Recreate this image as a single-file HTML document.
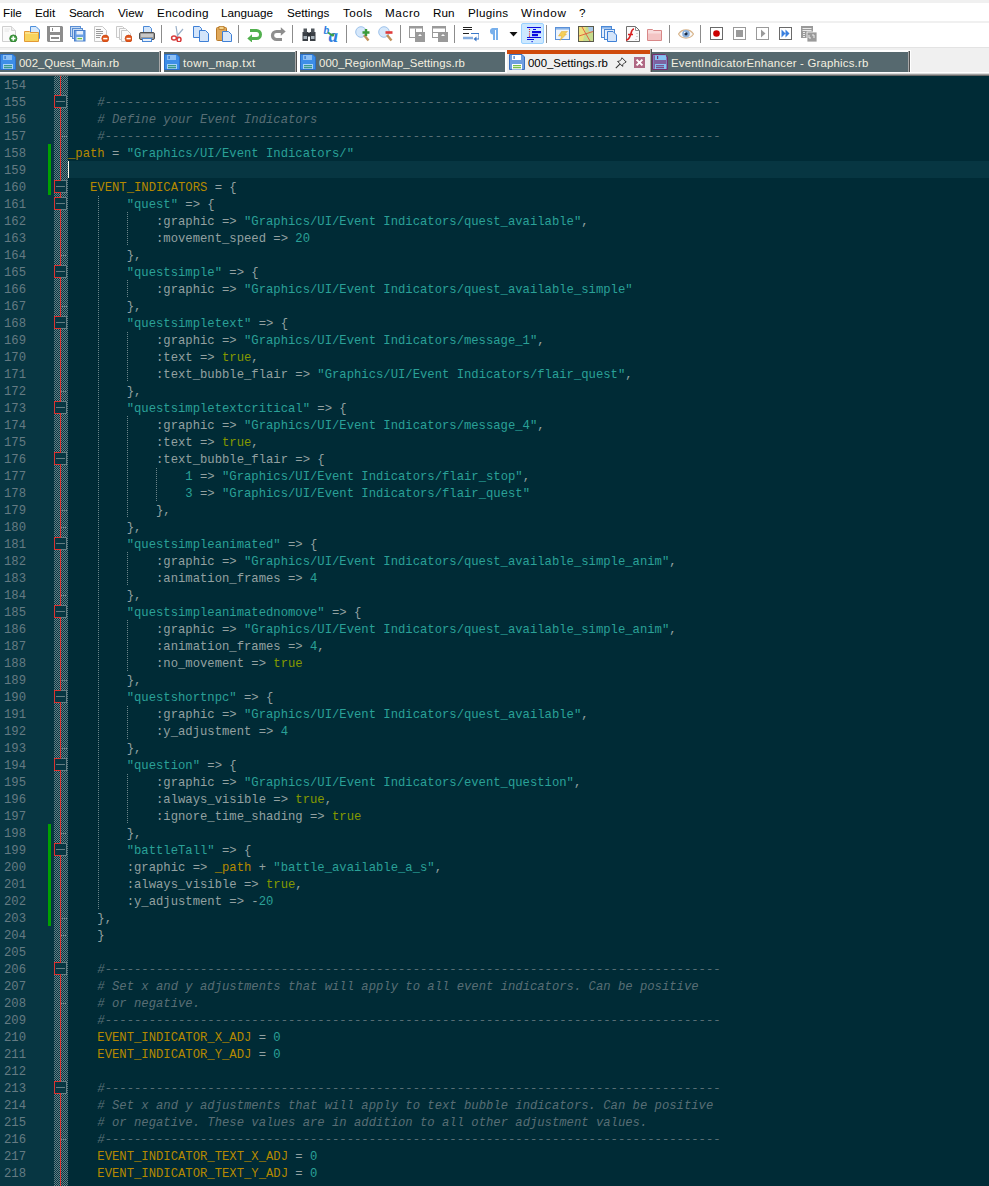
<!DOCTYPE html>
<html><head><meta charset="utf-8">
<style>
*{box-sizing:border-box}
html,body{margin:0;padding:0}
body{width:989px;height:1186px;overflow:hidden;position:relative;background:#f0f0f0;font-family:"Liberation Sans",sans-serif}
#menubar{position:absolute;left:0;top:3px;width:989px;height:18px;background:#fff}
#menubar span{position:absolute;top:2px;font-size:11.7px;color:#000;line-height:16px}
#mline{position:absolute;left:0;top:21px;width:989px;height:2px;background:#f0f0f0}
#toolbar{position:absolute;left:0;top:23px;width:989px;height:24px;background:#fff}
#tline{position:absolute;left:0;top:47px;width:989px;height:1px;background:#e3e3e3}
#tabbar{position:absolute;left:0;top:48px;width:989px;height:24px;background:#f0f0f0}
.tab{position:absolute;top:52px;height:20px;background:#56696f}
.sepl,.sepd{position:absolute;top:51px;width:1px;height:21px;background:#a8a8a8}
.sepd{background:#505050}
.tab .tx{position:absolute;left:19px;top:4px;font-size:11.4px;color:#f4f0e0;white-space:nowrap;line-height:14px}
.tab svg{position:absolute;left:0;top:2px}
.tab.act{top:50px;height:23px;background:#f0f0f0;border-top:4px solid #cf4a0c;z-index:2}
.tab.act>svg:first-child{left:2px;top:0px}
.tab.act .tx{left:21px;top:2px}
#tabline{position:absolute;left:0;top:72px;width:989px;height:4px;background:linear-gradient(to bottom,#fff 0 1px,#dcdcdc 1px 2px,#a0a0a0 2px 3px,#6a6a6a 3px 4px)}
#edtop{display:none}
#editor{position:absolute;left:0;top:0;width:989px;height:1186px;pointer-events:none}
#ed_bg{position:absolute;left:0;top:76px;width:989px;height:1110px;background:#002b36}
#lnm{position:absolute;left:0;top:76px;width:54px;height:1110px;background:#073642}
#fm{position:absolute;left:54px;top:76px;width:14px;height:1110px}
.ln{position:absolute;left:4px;height:17px;font-family:"Liberation Mono",monospace;font-size:12.22px;line-height:17px;color:#657b83;padding-top:2px}
.line{position:absolute;left:68px;width:921px;height:17px;font-family:"Liberation Mono",monospace;font-size:12.22px;line-height:17px;color:#93a1a1;white-space:pre;padding-top:2px}
.line.cur{background:#073642}
.c{color:#586e75;font-style:italic}
.s{color:#2aa198}
.k{color:#b58900}
.t{color:#859900}
.g0,.g1{position:absolute;width:1px;height:17px;background:repeating-linear-gradient(to bottom,#6a8489 0 1px,transparent 1px 2px)}
.g1{background:repeating-linear-gradient(to bottom,transparent 0 1px,#6a8489 1px 2px)}
#redline{position:absolute;left:60px;top:76px;width:1px;height:1110px;background:#dc322f}
.box{position:absolute;left:54px;width:13px;height:13px;background:#073642;border:1px solid #647d82}
.box .bl{position:absolute;left:-1px;top:-1px;width:7px;height:13px;border:1px solid #dc322f;border-right:none}
.minus{position:absolute;left:1px;top:5px;width:9px;height:1px;background:#647d82}
.tick{position:absolute;left:61px;width:6px;height:1px;background:#647d82}
.green{position:absolute;left:48px;width:3px;background:#00a000}
#caret{position:absolute;left:68px;top:161px;width:1px;height:17px;background:#fdf6e3}
</style></head><body>
<div id="menubar">
<span style="left:3px">File</span><span style="left:35px">Edit</span><span style="left:69px;letter-spacing:-0.35px">Search</span><span style="left:118px">View</span><span style="left:157px;letter-spacing:0.4px">Encoding</span><span style="left:221px">Language</span><span style="left:287px">Settings</span><span style="left:343px;letter-spacing:0.45px">Tools</span><span style="left:385px;letter-spacing:0.6px">Macro</span><span style="left:433px">Run</span><span style="left:468px;letter-spacing:0.3px">Plugins</span><span style="left:521px;letter-spacing:0.65px">Window</span><span style="left:579px">?</span>
</div>
<div id="mline"></div>
<div id="toolbar"></div><div style="position:absolute;left:0;top:0;width:0;height:0"><svg style="position:absolute;left:2px;top:26px" width="16" height="16" viewBox="0 0 16 16"><path d="M0.5,0.5H9.5L13.5,4.5V15.5H0.5Z" fill="#fbfbfb" stroke="#cfcfcf"/><path d="M9.5,0.5V4.5H13.5" fill="#eee" stroke="#d5d5d5"/><path d="M2.5,3H8M2.5,5H7" stroke="#e6e6e6"/><circle cx="11.3" cy="12.5" r="3.6" fill="#3c9a3c" stroke="#2e7d2e" stroke-width="0.8"/><path d="M11.3,10.3V14.7M9.1,12.5H13.5" stroke="#fff" stroke-width="1.6"/></svg>
<svg style="position:absolute;left:24px;top:26px" width="16" height="16" viewBox="0 0 16 16"><path d="M6.5,0.5H12L15.5,4V12.5H6.5Z" fill="#d6e8fb" stroke="#4c8fdc"/><path d="M0.5,5.5H5.5L6.5,6.5H14.5V15.5H0.5Z" fill="#fbe28a" stroke="#e39a35"/><path d="M1,8H14V15H1Z" fill="#f6cf4a" opacity="0.7"/></svg>
<svg style="position:absolute;left:47px;top:26px" width="16" height="16" viewBox="0 0 16 16"><path d="M0,0H15L16,1V16H1L0,15Z" fill="#8d8d8d"/><rect x="3" y="1" width="10" height="5" fill="#fff"/><rect x="5" y="2" width="1" height="3" fill="#8d8d8d"/><rect x="3" y="9" width="10" height="6" fill="#fff"/><rect x="4" y="11" width="8" height="2" fill="#8d8d8d"/></svg>
<svg style="position:absolute;left:70px;top:26px" width="16" height="16" viewBox="0 0 16 16"><rect x="0.5" y="0.5" width="10" height="10" fill="#c4daf4" stroke="#5b8fd4"/><rect x="2.5" y="2.5" width="10" height="10" fill="#c4daf4" stroke="#5b8fd4"/><rect x="4.5" y="4.5" width="10.5" height="10.5" fill="#6aa0e4" stroke="#4a80cc"/><rect x="6.5" y="5" width="6.5" height="3.5" fill="#e4eefb"/><rect x="6.5" y="11" width="6.5" height="3.5" fill="#eef5ea"/><rect x="7.5" y="12" width="4.5" height="1.2" fill="#6abf3a"/></svg>
<svg style="position:absolute;left:93px;top:26px" width="16" height="16" viewBox="0 0 16 16"><path d="M1.5,0.5H9.5L13.5,4.5V15.5H1.5Z" fill="#fbfbfb" stroke="#c9c9c9"/><path d="M3,3.5H8M3,5.5H10M3,7.5H10M3,9.5H8M3,11.5H7" stroke="#9a9a9a" stroke-width="1"/><circle cx="12.3" cy="12.6" r="3.5" fill="#e0561a" stroke="#c84310" stroke-width="0.7"/><path d="M10.2,12.6H14.4" stroke="#fff" stroke-width="1.5"/></svg>
<svg style="position:absolute;left:116px;top:26px" width="16" height="16" viewBox="0 0 16 16"><path d="M0.5,0.5H6.5L9.5,3.5V11.5H0.5Z" fill="#fbfbfb" stroke="#c9c9c9"/><path d="M3.5,2.5H9.5L12.5,5.5V13.5H3.5Z" fill="#fbfbfb" stroke="#c9c9c9"/><path d="M5.5,4.5H11.5L14.5,7.5V15.5H5.5Z" fill="#fbfbfb" stroke="#c9c9c9"/><circle cx="12.6" cy="12.6" r="3.5" fill="#e0561a" stroke="#c84310" stroke-width="0.7"/><path d="M10.5,12.6H14.7" stroke="#fff" stroke-width="1.5"/></svg>
<svg style="position:absolute;left:139px;top:26px" width="16" height="16" viewBox="0 0 16 16"><path d="M4.5,0.5H10.5L12.5,2.5V7.5H4.5Z" fill="#d3e5fa" stroke="#4a88d6"/><rect x="0.5" y="6.5" width="15" height="7" rx="1.5" fill="#9a9a9a" stroke="#505050"/><rect x="2" y="8" width="12" height="3" fill="#c8c8c8"/><rect x="3.5" y="12.5" width="9" height="3" fill="#e8f1fb" stroke="#4a88d6"/></svg>
<div style="position:absolute;left:161px;top:25px;width:1px;height:18px;background:#8c8c8c"></div>
<svg style="position:absolute;left:170px;top:26px" width="16" height="16" viewBox="0 0 16 16"><path d="M8,13L6,0M7,10L13,3" stroke="#9ab0c8" stroke-width="1.2"/><ellipse cx="4" cy="12" rx="2.4" ry="2" fill="none" stroke="#d83a3a" stroke-width="1.5"/><ellipse cx="9" cy="13.5" rx="2" ry="2.3" fill="none" stroke="#d83a3a" stroke-width="1.5"/></svg>
<svg style="position:absolute;left:193px;top:26px" width="16" height="16" viewBox="0 0 16 16"><path d="M0.5,0.5H6.5L8.5,2.5V11.5H0.5Z" fill="#d4e5fa" stroke="#3f80d6"/><path d="M6.5,4.5H12.5L15.5,7.5V15.5H6.5Z" fill="#d4e5fa" stroke="#3f80d6"/></svg>
<svg style="position:absolute;left:216px;top:26px" width="16" height="16" viewBox="0 0 16 16"><rect x="0.5" y="1.5" width="10" height="13" rx="1" fill="#e0a85a" stroke="#b97a2a"/><rect x="3" y="0.5" width="5" height="3" fill="#f3d28a" stroke="#b97a2a" stroke-width="0.8"/><path d="M6.5,5.5H12.5L15.5,8.5V15.5H6.5Z" fill="#dbe9fb" stroke="#3f80d6"/></svg>
<div style="position:absolute;left:238px;top:25px;width:1px;height:18px;background:#8c8c8c"></div>
<svg style="position:absolute;left:247px;top:26px" width="16" height="16" viewBox="0 0 16 16"><path d="M3.5,12.5H9.5A4,4 0 0 0 9.5,4.5H3" fill="none" stroke="#52b04e" stroke-width="3"/><path d="M0.3,12.5L5,8.3V16.5Z" fill="#52b04e"/></svg>
<svg style="position:absolute;left:270px;top:26px" width="16" height="16" viewBox="0 0 16 16"><path d="M12,5.5H6.5A4,4 0 0 0 6.5,13.5H12" fill="none" stroke="#8e8e8e" stroke-width="3.2"/><path d="M15.7,5.5L10.8,1.2V9.8Z" fill="#8e8e8e"/></svg>
<div style="position:absolute;left:292px;top:25px;width:1px;height:18px;background:#8c8c8c"></div>
<svg style="position:absolute;left:301px;top:26px" width="16" height="16" viewBox="0 0 16 16"><rect x="1.5" y="6" width="5.5" height="9" fill="#3a3f45"/><rect x="9" y="6" width="5.5" height="9" fill="#3a3f45"/><rect x="2.5" y="2.5" width="3.5" height="4" fill="#50565c"/><rect x="10" y="2.5" width="3.5" height="4" fill="#50565c"/><rect x="6.5" y="6.5" width="3" height="4" fill="#2a2e33"/><rect x="2.5" y="10" width="3.5" height="3" fill="#a8b2ba"/><rect x="10" y="10" width="3.5" height="3" fill="#a8b2ba"/></svg>
<svg style="position:absolute;left:323px;top:26px" width="18" height="16" viewBox="0 0 18 16"><text x="0.5" y="8" font-family="Liberation Serif" font-style="italic" font-weight="bold" font-size="11.5" fill="#2f7fe0">b</text><text x="5.5" y="15.5" font-family="Liberation Serif" font-style="italic" font-weight="bold" font-size="19" fill="#2f7fe0">a</text><path d="M5,6.5L10,10" stroke="#3aa04a" stroke-width="1.8"/><path d="M10.8,10.8L8.2,7.8L11.5,7.5Z" fill="#3aa04a"/></svg>
<div style="position:absolute;left:346px;top:25px;width:1px;height:18px;background:#8c8c8c"></div>
<svg style="position:absolute;left:355px;top:26px" width="16" height="16" viewBox="0 0 16 16"><circle cx="6" cy="6" r="5.3" fill="#d6e8fb" stroke="#9ec2ea"/><path d="M9,9L13.5,14.5" stroke="#c0915a" stroke-width="2.4"/><path d="M11,3V10M7.5,6.5H14.5" stroke="#3a9a3a" stroke-width="2.4"/></svg>
<svg style="position:absolute;left:378px;top:26px" width="16" height="16" viewBox="0 0 16 16"><circle cx="6" cy="6" r="5.3" fill="#d6e8fb" stroke="#9ec2ea"/><path d="M9,9L13.5,14.5" stroke="#c0915a" stroke-width="2.4"/><path d="M7.5,6.5H14.5" stroke="#e03a3a" stroke-width="2.6"/></svg>
<div style="position:absolute;left:400px;top:25px;width:1px;height:18px;background:#8c8c8c"></div>
<svg style="position:absolute;left:409px;top:26px" width="16" height="16" viewBox="0 0 16 16"><rect x="0.5" y="0.5" width="13" height="11" fill="#fff" stroke="#9a9a9a"/><rect x="0.5" y="0.5" width="13" height="2" fill="#9a9a9a"/><path d="M6.5,2.5V11.5" stroke="#9a9a9a"/><rect x="6" y="6" width="10" height="10" fill="#9a9a9a"/><path d="M9,10L11,8L13,10Z" fill="#fff"/></svg>
<svg style="position:absolute;left:432px;top:26px" width="16" height="16" viewBox="0 0 16 16"><rect x="0.5" y="0.5" width="13" height="11" fill="#fff" stroke="#9a9a9a"/><rect x="0.5" y="0.5" width="13" height="2" fill="#9a9a9a"/><path d="M0.5,6.5H13.5" stroke="#9a9a9a"/><rect x="6" y="6" width="10" height="10" fill="#9a9a9a"/><path d="M9,10L11,8L13,10Z" fill="#fff"/></svg>
<div style="position:absolute;left:454px;top:25px;width:1px;height:18px;background:#8c8c8c"></div>
<svg style="position:absolute;left:463px;top:26px" width="16" height="16" viewBox="0 0 16 16"><path d="M0,1.5H9M0,3.5H9M0,7.5H6" stroke="#222" stroke-width="1.1"/><path d="M0,12H10" stroke="#86aee0" stroke-width="2.5"/><path d="M8,7.5H16V13H13" fill="none" stroke="#3a78c8" stroke-width="1.1"/><path d="M10.5,13L13.5,10.5V15.5Z" fill="#3a78c8"/></svg>
<svg style="position:absolute;left:489px;top:27px" width="10" height="14" viewBox="0 0 10 14"><path d="M3.5,1H9V13H7V3H6V13H4V7.5A3.3,3.3 0 0 1 3.5,1Z" fill="#78b0ec"/></svg>
<svg style="position:absolute;left:509px;top:32px" width="9" height="5" viewBox="0 0 9 5"><path d="M0.5,0H8.5L4.5,4.5Z" fill="#111"/></svg>
<div style="position:absolute;left:521px;top:23px;width:23px;height:21px;background:#cce8ff;border:1px solid #99d1ff;border-radius:2px"></div>
<svg style="position:absolute;left:526px;top:27px" width="16" height="16" viewBox="0 0 16 16"><path d="M1,0.5H15M1,10.5H15M1,12.5H8" stroke="#0a0ae0" stroke-width="1.2"/><path d="M7,2.5H10" stroke="#0a0ae0" stroke-width="1"/><rect x="6" y="4" width="9" height="2.2" fill="#0a0ae0"/><rect x="6" y="7" width="6" height="2.2" fill="#0a0ae0"/><rect x="5.5" y="14" width="1.2" height="1.2" fill="#0a0ae0"/><path d="M3.5,2V10" stroke="#e02020" stroke-width="1.1" stroke-dasharray="1.1,1.1"/></svg>
<div style="position:absolute;left:546px;top:25px;width:1px;height:18px;background:#8c8c8c"></div>
<svg style="position:absolute;left:555px;top:26px" width="16" height="16" viewBox="0 0 16 16"><rect x="0.5" y="1.5" width="14" height="12" fill="#eef4fb" stroke="#5a90d8"/><rect x="1" y="2" width="13" height="1.6" fill="#8ab4e8"/><path d="M6.5,5.5H12.5L9.5,8H11.5L5,14.5L6.8,10H3.5Z" fill="#f4cf5a" stroke="#e0aa30" stroke-width="0.5"/></svg>
<svg style="position:absolute;left:578px;top:26px" width="16" height="16" viewBox="0 0 16 16"><rect x="0.5" y="0.5" width="15" height="15" fill="#c6dc8e" stroke="#5a5a4a"/><path d="M1,1H8L5,15H1Z" fill="#ece07e"/><path d="M10,1H15V6L11,5Z" fill="#a8c8e8"/><path d="M4,1L12,15M1,10L15,5.5" stroke="#e05a3a" stroke-width="0.9"/></svg>
<svg style="position:absolute;left:601px;top:26px" width="16" height="16" viewBox="0 0 16 16"><rect x="0.5" y="0.5" width="10" height="11" fill="#e4eefb" stroke="#4a88d6"/><rect x="1" y="1" width="9" height="1.6" fill="#8ab4e8"/><rect x="3.5" y="3.5" width="10" height="10" fill="#e4eefb" stroke="#4a88d6"/><path d="M6.5,5.5H12L15.5,9V15.5H6.5Z" fill="#d4e5fa" stroke="#3f80d6"/></svg>
<svg style="position:absolute;left:624px;top:26px" width="16" height="16" viewBox="0 0 16 16"><path d="M2.5,0.5H11.5L15.5,4.5V15.5H2.5Z" fill="#fbfbfb" stroke="#707070"/><path d="M11.5,0.5V4.5H15.5" fill="none" stroke="#909090"/><path d="M13,7V8M13,10V11M12,13V14" stroke="#999" stroke-width="0.8"/><path d="M10,3C7.5,3 7.5,6 6.5,9C5.5,12 4.5,14 2,14M4,8.5H9" stroke="#d82020" stroke-width="1.6" fill="none"/></svg>
<svg style="position:absolute;left:647px;top:26px" width="16" height="16" viewBox="0 0 16 16"><path d="M0.5,3.5H5.5L6.5,4.5H14.5V14.5H0.5Z" fill="#f8dcdc" stroke="#d88888"/><path d="M1,7.5H14V14H1Z" fill="#f0b4b4" opacity="0.6"/></svg>
<div style="position:absolute;left:669px;top:25px;width:1px;height:18px;background:#8c8c8c"></div>
<svg style="position:absolute;left:678px;top:26px" width="16" height="16" viewBox="0 0 16 16"><path d="M0.5,8C4,2.5 12,2.5 15.5,8C12,13.5 4,13.5 0.5,8Z" fill="#f8f8f8" stroke="#d8b48a" stroke-width="1.2"/><circle cx="8" cy="7.8" r="3.8" fill="#8ab0dc"/><circle cx="8" cy="7.8" r="1.6" fill="#1a2a40"/><circle cx="6.8" cy="6.6" r="0.8" fill="#fff"/></svg>
<div style="position:absolute;left:700px;top:25px;width:1px;height:18px;background:#8c8c8c"></div>
<svg style="position:absolute;left:710px;top:27px" width="13" height="13" viewBox="0 0 13 13"><rect x="0.5" y="0.5" width="12" height="12" fill="#fff" stroke="#6a6a6a"/><circle cx="6.5" cy="6.5" r="3.3" fill="#cc0000"/></svg>
<svg style="position:absolute;left:733px;top:27px" width="13" height="13" viewBox="0 0 13 13"><rect x="0.5" y="0.5" width="12" height="12" fill="#fff" stroke="#9a9a9a"/><rect x="3" y="3" width="7" height="7" fill="#9a9a9a"/></svg>
<svg style="position:absolute;left:756px;top:27px" width="13" height="13" viewBox="0 0 13 13"><rect x="0.5" y="0.5" width="12" height="12" fill="#fff" stroke="#9a9a9a"/><path d="M5,2.5L9.5,6.5L5,10.5Z" fill="#9a9a9a"/></svg>
<svg style="position:absolute;left:779px;top:27px" width="13" height="13" viewBox="0 0 13 13"><rect x="0.5" y="0.5" width="12" height="12" fill="#fff" stroke="#6a6a6a"/><path d="M2.5,2.5L6.5,6.5L2.5,10.5ZM6.5,2.5L10.5,6.5L6.5,10.5Z" fill="#3a80e0"/></svg>
<svg style="position:absolute;left:801px;top:26px" width="16" height="16" viewBox="0 0 16 16"><rect x="0" y="0" width="12" height="12" fill="#9a9a9a"/><path d="M1.5,2.5H10.5M1.5,4.5H10.5" stroke="#fff" stroke-width="0.8"/><path d="M2,6.5H4M2,8.5H4M2,10.5H4" stroke="#fff" stroke-width="0.8"/><rect x="6" y="6" width="10" height="10" fill="#9a9a9a" stroke="#fff" stroke-width="0.8"/><path d="M8,9V12H10M11,9H13V12" stroke="#fff" stroke-width="0.8" fill="none"/></svg></div>
<div id="tline"></div>
<div id="tabbar"></div>
<div style="position:absolute;left:0;top:50px;width:911px;height:22px;background:#fff"></div>
<div class="tab" style="left:0;width:159px"><svg width="16" height="16" viewBox="0 0 16 16"><path d="M0.5,0.5H13L15.5,3V15.5H0.5Z" fill="#3d8ee8" stroke="#2a6fc8"/><rect x="3" y="1" width="9" height="5" fill="#8ec0f4"/><rect x="4.5" y="2" width="1.2" height="3" fill="#2a6fc8"/><rect x="3" y="10" width="10" height="5" fill="#a8d2f8"/><rect x="4" y="11" width="8" height="1.3" fill="#3a9a8a"/><rect x="4" y="13" width="8" height="1.3" fill="#3a9a8a"/></svg><span class="tx">002_Quest_Main.rb</span></div>
<div class="sepl" style="left:159px"></div><div class="sepd" style="left:160px"></div>
<div class="tab" style="left:164px;width:131px"><svg width="16" height="16" viewBox="0 0 16 16"><path d="M0.5,0.5H13L15.5,3V15.5H0.5Z" fill="#3d8ee8" stroke="#2a6fc8"/><rect x="3" y="1" width="9" height="5" fill="#8ec0f4"/><rect x="4.5" y="2" width="1.2" height="3" fill="#2a6fc8"/><rect x="3" y="10" width="10" height="5" fill="#a8d2f8"/><rect x="4" y="11" width="8" height="1.3" fill="#3a9a8a"/><rect x="4" y="13" width="8" height="1.3" fill="#3a9a8a"/></svg><span class="tx" style="letter-spacing:0.4px">town_map.txt</span></div>
<div class="sepl" style="left:295px"></div><div class="sepd" style="left:296px"></div>
<div class="tab" style="left:300px;width:205px"><svg width="16" height="16" viewBox="0 0 16 16"><path d="M0.5,0.5H13L15.5,3V15.5H0.5Z" fill="#3d8ee8" stroke="#2a6fc8"/><rect x="3" y="1" width="9" height="5" fill="#8ec0f4"/><rect x="4.5" y="2" width="1.2" height="3" fill="#2a6fc8"/><rect x="3" y="10" width="10" height="5" fill="#a8d2f8"/><rect x="4" y="11" width="8" height="1.3" fill="#3a9a8a"/><rect x="4" y="13" width="8" height="1.3" fill="#3a9a8a"/></svg><span class="tx" style="letter-spacing:0.06px">000_RegionMap_Settings.rb</span></div>
<div class="tab act" style="left:507px;width:143px"><svg width="16" height="16" viewBox="0 0 16 16"><path d="M0.5,0.5H13L15.5,3V15.5H0.5Z" fill="#6f9ee0" stroke="#3a70c0"/><rect x="3" y="1" width="9" height="5" fill="#fff"/><rect x="4.5" y="2" width="1.2" height="3" fill="#3a70c0"/><rect x="3" y="10" width="10" height="5.5" fill="#fff"/><rect x="4" y="11" width="8" height="1.3" fill="#7ac04a"/><rect x="4" y="13" width="8" height="1.3" fill="#7ac04a"/></svg><span class="tx" style="color:#000">000_Settings.rb</span>
<svg style="position:absolute;left:108px;top:3px" width="12" height="12" viewBox="0 0 12 12"><path d="M7,0.8L11.2,5L9.8,5.6L7.8,7.6L7.6,9.4L2.6,4.4L4.4,4.2L6.4,2.2Z" fill="none" stroke="#333" stroke-width="1"/><path d="M4.8,7.2L0.8,11.2" stroke="#333" stroke-width="1.1"/></svg>
<svg style="position:absolute;left:127px;top:3px" width="11" height="11" viewBox="0 0 11 11"><rect width="11" height="11" fill="#b06884"/><path d="M2.6,2.6L8.4,8.4M8.4,2.6L2.6,8.4" stroke="#fff" stroke-width="2"/></svg></div>
<div class="sepl" style="left:650px;top:49px;height:24px"></div><div class="sepd" style="left:651px;top:49px;height:24px"></div>
<div class="tab" style="left:652px;width:256px"><svg width="16" height="16" viewBox="0 0 16 16"><path d="M0.5,0.5H13L15.5,3V15.5H0.5Z" fill="#7e62a0" stroke="#74306e"/><path d="M1.5,1.5H12.5L14.5,3.5V14.5H1.5Z" fill="none" stroke="#86b8ea" stroke-width="0.6" opacity="0.6"/><rect x="3" y="1.2" width="11" height="4.8" fill="#86c4f4"/><rect x="5" y="2" width="1.2" height="3" fill="#74306e"/><rect x="3" y="10" width="11" height="5" fill="#86c4f4"/><rect x="4" y="11.3" width="8" height="1" fill="#74306e"/><rect x="4" y="13.2" width="8" height="1" fill="#74306e"/></svg><span class="tx" style="letter-spacing:0.19px">EventIndicatorEnhancer - Graphics.rb</span></div>
<div class="sepl" style="left:908px"></div><div class="sepd" style="left:909px"></div>
<div id="tabline"></div>
<div id="edtop"></div>
<div id="ed_bg"></div>
<div id="lnm"></div>
<svg id="fm" width="14" height="1110"><defs><pattern id="chk" width="2" height="2" patternUnits="userSpaceOnUse"><rect width="2" height="2" fill="#073642"/><rect x="1" y="0" width="1" height="1" fill="#647d82"/><rect x="0" y="1" width="1" height="1" fill="#647d82"/></pattern></defs><rect width="14" height="1110" fill="url(#chk)" shape-rendering="crispEdges"/></svg>
<div id="redline"></div>
<div class="box" style="top:95px"><div class="bl"></div><div class="minus"></div></div>
<div class="box" style="top:180px"><div class="bl"></div><div class="minus"></div></div>
<div class="box" style="top:197px"><div class="bl"></div><div class="minus"></div></div>
<div class="box" style="top:265px"><div class="bl"></div><div class="minus"></div></div>
<div class="box" style="top:316px"><div class="bl"></div><div class="minus"></div></div>
<div class="box" style="top:401px"><div class="bl"></div><div class="minus"></div></div>
<div class="box" style="top:452px"><div class="bl"></div><div class="minus"></div></div>
<div class="box" style="top:537px"><div class="bl"></div><div class="minus"></div></div>
<div class="box" style="top:605px"><div class="bl"></div><div class="minus"></div></div>
<div class="box" style="top:690px"><div class="bl"></div><div class="minus"></div></div>
<div class="box" style="top:758px"><div class="bl"></div><div class="minus"></div></div>
<div class="box" style="top:843px"><div class="bl"></div><div class="minus"></div></div>
<div class="box" style="top:962px"><div class="bl"></div><div class="minus"></div></div>
<div class="box" style="top:1081px"><div class="bl"></div><div class="minus"></div></div>
<div class="tick" style="top:136px"></div>
<div class="tick" style="top:255px"></div>
<div class="tick" style="top:306px"></div>
<div class="tick" style="top:391px"></div>
<div class="tick" style="top:510px"></div>
<div class="tick" style="top:527px"></div>
<div class="tick" style="top:595px"></div>
<div class="tick" style="top:680px"></div>
<div class="tick" style="top:748px"></div>
<div class="tick" style="top:833px"></div>
<div class="tick" style="top:918px"></div>
<div class="tick" style="top:935px"></div>
<div class="tick" style="top:1003px"></div>
<div class="tick" style="top:1139px"></div>
<div class="green" style="top:144px;height:51px"></div>
<div class="green" style="top:824px;height:102px"></div>
<div class="ln" style="top:76px">154</div>
<div class="ln" style="top:93px">155</div>
<div class="ln" style="top:110px">156</div>
<div class="ln" style="top:127px">157</div>
<div class="ln" style="top:144px">158</div>
<div class="ln" style="top:161px">159</div>
<div class="ln" style="top:178px">160</div>
<div class="ln" style="top:195px">161</div>
<div class="ln" style="top:212px">162</div>
<div class="ln" style="top:229px">163</div>
<div class="ln" style="top:246px">164</div>
<div class="ln" style="top:263px">165</div>
<div class="ln" style="top:280px">166</div>
<div class="ln" style="top:297px">167</div>
<div class="ln" style="top:314px">168</div>
<div class="ln" style="top:331px">169</div>
<div class="ln" style="top:348px">170</div>
<div class="ln" style="top:365px">171</div>
<div class="ln" style="top:382px">172</div>
<div class="ln" style="top:399px">173</div>
<div class="ln" style="top:416px">174</div>
<div class="ln" style="top:433px">175</div>
<div class="ln" style="top:450px">176</div>
<div class="ln" style="top:467px">177</div>
<div class="ln" style="top:484px">178</div>
<div class="ln" style="top:501px">179</div>
<div class="ln" style="top:518px">180</div>
<div class="ln" style="top:535px">181</div>
<div class="ln" style="top:552px">182</div>
<div class="ln" style="top:569px">183</div>
<div class="ln" style="top:586px">184</div>
<div class="ln" style="top:603px">185</div>
<div class="ln" style="top:620px">186</div>
<div class="ln" style="top:637px">187</div>
<div class="ln" style="top:654px">188</div>
<div class="ln" style="top:671px">189</div>
<div class="ln" style="top:688px">190</div>
<div class="ln" style="top:705px">191</div>
<div class="ln" style="top:722px">192</div>
<div class="ln" style="top:739px">193</div>
<div class="ln" style="top:756px">194</div>
<div class="ln" style="top:773px">195</div>
<div class="ln" style="top:790px">196</div>
<div class="ln" style="top:807px">197</div>
<div class="ln" style="top:824px">198</div>
<div class="ln" style="top:841px">199</div>
<div class="ln" style="top:858px">200</div>
<div class="ln" style="top:875px">201</div>
<div class="ln" style="top:892px">202</div>
<div class="ln" style="top:909px">203</div>
<div class="ln" style="top:926px">204</div>
<div class="ln" style="top:943px">205</div>
<div class="ln" style="top:960px">206</div>
<div class="ln" style="top:977px">207</div>
<div class="ln" style="top:994px">208</div>
<div class="ln" style="top:1011px">209</div>
<div class="ln" style="top:1028px">210</div>
<div class="ln" style="top:1045px">211</div>
<div class="ln" style="top:1062px">212</div>
<div class="ln" style="top:1079px">213</div>
<div class="ln" style="top:1096px">214</div>
<div class="ln" style="top:1113px">215</div>
<div class="ln" style="top:1130px">216</div>
<div class="ln" style="top:1147px">217</div>
<div class="ln" style="top:1164px">218</div>
<div class="line" style="top:76px"></div>
<div class="line" style="top:93px">    <i class="c">#------------------------------------------------------------------------------------</i></div>
<div class="line" style="top:110px">    <i class="c"># Define your Event Indicators</i></div>
<div class="line" style="top:127px">    <i class="c">#------------------------------------------------------------------------------------</i></div>
<div class="line" style="top:144px"><span class="k">_path</span> = <span class="s">&quot;Graphics/UI/Event Indicators/&quot;</span></div>
<div class="line cur" style="top:161px"></div>
<div class="line" style="top:178px">   <span class="k">EVENT_INDICATORS</span> = {</div>
<div class="line" style="top:195px">        <span class="s">&quot;quest&quot;</span> =&gt; {</div>
<div class="line" style="top:212px">            :graphic =&gt; <span class="s">&quot;Graphics/UI/Event Indicators/quest_available&quot;</span>,</div>
<div class="line" style="top:229px">            :movement_speed =&gt; <span class="s">20</span></div>
<div class="line" style="top:246px">        },</div>
<div class="line" style="top:263px">        <span class="s">&quot;questsimple&quot;</span> =&gt; {</div>
<div class="line" style="top:280px">            :graphic =&gt; <span class="s">&quot;Graphics/UI/Event Indicators/quest_available_simple&quot;</span></div>
<div class="line" style="top:297px">        },</div>
<div class="line" style="top:314px">        <span class="s">&quot;questsimpletext&quot;</span> =&gt; {</div>
<div class="line" style="top:331px">            :graphic =&gt; <span class="s">&quot;Graphics/UI/Event Indicators/message_1&quot;</span>,</div>
<div class="line" style="top:348px">            :text =&gt; <span class="t">true</span>,</div>
<div class="line" style="top:365px">            :text_bubble_flair =&gt; <span class="s">&quot;Graphics/UI/Event Indicators/flair_quest&quot;</span>,</div>
<div class="line" style="top:382px">        },</div>
<div class="line" style="top:399px">        <span class="s">&quot;questsimpletextcritical&quot;</span> =&gt; {</div>
<div class="line" style="top:416px">            :graphic =&gt; <span class="s">&quot;Graphics/UI/Event Indicators/message_4&quot;</span>,</div>
<div class="line" style="top:433px">            :text =&gt; <span class="t">true</span>,</div>
<div class="line" style="top:450px">            :text_bubble_flair =&gt; {</div>
<div class="line" style="top:467px">                <span class="s">1</span> =&gt; <span class="s">&quot;Graphics/UI/Event Indicators/flair_stop&quot;</span>,</div>
<div class="line" style="top:484px">                <span class="s">3</span> =&gt; <span class="s">&quot;Graphics/UI/Event Indicators/flair_quest&quot;</span></div>
<div class="line" style="top:501px">            },</div>
<div class="line" style="top:518px">        },</div>
<div class="line" style="top:535px">        <span class="s">&quot;questsimpleanimated&quot;</span> =&gt; {</div>
<div class="line" style="top:552px">            :graphic =&gt; <span class="s">&quot;Graphics/UI/Event Indicators/quest_available_simple_anim&quot;</span>,</div>
<div class="line" style="top:569px">            :animation_frames =&gt; <span class="s">4</span></div>
<div class="line" style="top:586px">        },</div>
<div class="line" style="top:603px">        <span class="s">&quot;questsimpleanimatednomove&quot;</span> =&gt; {</div>
<div class="line" style="top:620px">            :graphic =&gt; <span class="s">&quot;Graphics/UI/Event Indicators/quest_available_simple_anim&quot;</span>,</div>
<div class="line" style="top:637px">            :animation_frames =&gt; <span class="s">4</span>,</div>
<div class="line" style="top:654px">            :no_movement =&gt; <span class="t">true</span></div>
<div class="line" style="top:671px">        },</div>
<div class="line" style="top:688px">        <span class="s">&quot;questshortnpc&quot;</span> =&gt; {</div>
<div class="line" style="top:705px">            :graphic =&gt; <span class="s">&quot;Graphics/UI/Event Indicators/quest_available&quot;</span>,</div>
<div class="line" style="top:722px">            :y_adjustment =&gt; <span class="s">4</span></div>
<div class="line" style="top:739px">        },</div>
<div class="line" style="top:756px">        <span class="s">&quot;question&quot;</span> =&gt; {</div>
<div class="line" style="top:773px">            :graphic =&gt; <span class="s">&quot;Graphics/UI/Event Indicators/event_question&quot;</span>,</div>
<div class="line" style="top:790px">            :always_visible =&gt; <span class="t">true</span>,</div>
<div class="line" style="top:807px">            :ignore_time_shading =&gt; <span class="t">true</span></div>
<div class="line" style="top:824px">        },</div>
<div class="line" style="top:841px">        <span class="s">&quot;battleTall&quot;</span> =&gt; {</div>
<div class="line" style="top:858px">        :graphic =&gt; <span class="k">_path</span> + <span class="s">&quot;battle_available_a_s&quot;</span>,</div>
<div class="line" style="top:875px">        :always_visible =&gt; <span class="t">true</span>,</div>
<div class="line" style="top:892px">        :y_adjustment =&gt; -<span class="s">20</span></div>
<div class="line" style="top:909px">    },</div>
<div class="line" style="top:926px">    }</div>
<div class="line" style="top:943px"></div>
<div class="line" style="top:960px">    <i class="c">#------------------------------------------------------------------------------------</i></div>
<div class="line" style="top:977px">    <i class="c"># Set x and y adjustments that will apply to all event indicators. Can be positive</i></div>
<div class="line" style="top:994px">    <i class="c"># or negative.</i></div>
<div class="line" style="top:1011px">    <i class="c">#------------------------------------------------------------------------------------</i></div>
<div class="line" style="top:1028px">    <span class="k">EVENT_INDICATOR_X_ADJ</span> = <span class="s">0</span></div>
<div class="line" style="top:1045px">    <span class="k">EVENT_INDICATOR_Y_ADJ</span> = <span class="s">0</span></div>
<div class="line" style="top:1062px"></div>
<div class="line" style="top:1079px">    <i class="c">#------------------------------------------------------------------------------------</i></div>
<div class="line" style="top:1096px">    <i class="c"># Set x and y adjustments that will apply to text bubble indicators. Can be positive</i></div>
<div class="line" style="top:1113px">    <i class="c"># or negative. These values are in addition to all other adjustment values.</i></div>
<div class="line" style="top:1130px">    <i class="c">#------------------------------------------------------------------------------------</i></div>
<div class="line" style="top:1147px">    <span class="k">EVENT_INDICATOR_TEXT_X_ADJ</span> = <span class="s">0</span></div>
<div class="line" style="top:1164px">    <span class="k">EVENT_INDICATOR_TEXT_Y_ADJ</span> = <span class="s">0</span></div>
<div class="g1" style="left:98px;top:195px"></div>
<div class="g0" style="left:98px;top:212px"></div>
<div class="g0" style="left:127px;top:212px"></div>
<div class="g1" style="left:98px;top:229px"></div>
<div class="g1" style="left:127px;top:229px"></div>
<div class="g0" style="left:98px;top:246px"></div>
<div class="g1" style="left:98px;top:263px"></div>
<div class="g0" style="left:98px;top:280px"></div>
<div class="g0" style="left:127px;top:280px"></div>
<div class="g1" style="left:98px;top:297px"></div>
<div class="g0" style="left:98px;top:314px"></div>
<div class="g1" style="left:98px;top:331px"></div>
<div class="g1" style="left:127px;top:331px"></div>
<div class="g0" style="left:98px;top:348px"></div>
<div class="g0" style="left:127px;top:348px"></div>
<div class="g1" style="left:98px;top:365px"></div>
<div class="g1" style="left:127px;top:365px"></div>
<div class="g0" style="left:98px;top:382px"></div>
<div class="g1" style="left:98px;top:399px"></div>
<div class="g0" style="left:98px;top:416px"></div>
<div class="g0" style="left:127px;top:416px"></div>
<div class="g1" style="left:98px;top:433px"></div>
<div class="g1" style="left:127px;top:433px"></div>
<div class="g0" style="left:98px;top:450px"></div>
<div class="g0" style="left:127px;top:450px"></div>
<div class="g1" style="left:98px;top:467px"></div>
<div class="g1" style="left:127px;top:467px"></div>
<div class="g1" style="left:156px;top:467px"></div>
<div class="g0" style="left:98px;top:484px"></div>
<div class="g0" style="left:127px;top:484px"></div>
<div class="g0" style="left:156px;top:484px"></div>
<div class="g1" style="left:98px;top:501px"></div>
<div class="g1" style="left:127px;top:501px"></div>
<div class="g0" style="left:98px;top:518px"></div>
<div class="g1" style="left:98px;top:535px"></div>
<div class="g0" style="left:98px;top:552px"></div>
<div class="g0" style="left:127px;top:552px"></div>
<div class="g1" style="left:98px;top:569px"></div>
<div class="g1" style="left:127px;top:569px"></div>
<div class="g0" style="left:98px;top:586px"></div>
<div class="g1" style="left:98px;top:603px"></div>
<div class="g0" style="left:98px;top:620px"></div>
<div class="g0" style="left:127px;top:620px"></div>
<div class="g1" style="left:98px;top:637px"></div>
<div class="g1" style="left:127px;top:637px"></div>
<div class="g0" style="left:98px;top:654px"></div>
<div class="g0" style="left:127px;top:654px"></div>
<div class="g1" style="left:98px;top:671px"></div>
<div class="g0" style="left:98px;top:688px"></div>
<div class="g1" style="left:98px;top:705px"></div>
<div class="g1" style="left:127px;top:705px"></div>
<div class="g0" style="left:98px;top:722px"></div>
<div class="g0" style="left:127px;top:722px"></div>
<div class="g1" style="left:98px;top:739px"></div>
<div class="g0" style="left:98px;top:756px"></div>
<div class="g1" style="left:98px;top:773px"></div>
<div class="g1" style="left:127px;top:773px"></div>
<div class="g0" style="left:98px;top:790px"></div>
<div class="g0" style="left:127px;top:790px"></div>
<div class="g1" style="left:98px;top:807px"></div>
<div class="g1" style="left:127px;top:807px"></div>
<div class="g0" style="left:98px;top:824px"></div>
<div class="g1" style="left:98px;top:841px"></div>
<div class="g0" style="left:98px;top:858px"></div>
<div class="g1" style="left:98px;top:875px"></div>
<div class="g0" style="left:98px;top:892px"></div>
<div id="caret"></div>
</body></html>
